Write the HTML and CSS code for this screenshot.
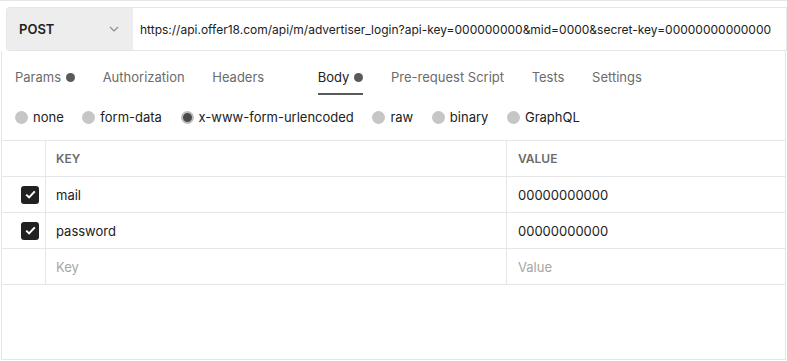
FILE: index.html
```html
<!DOCTYPE html>
<html>
<head>
  <title>Request</title>
  <link rel="stylesheet" href="styles.css">
</head>
<body>
  <div class="request">
    <div class="url-bar">
      <div class="method">
        <span>POST</span>
        <svg class="chevron" width="10" height="6" viewBox="0 0 10 6"><path d="M1 1l4 4 4-4" fill="none" stroke="#8a8a8a" stroke-width="1.1"/></svg>
      </div>
      <div class="url">https://api.offer18.com/api/m/advertiser_login?api-key=000000000&amp;mid=0000&amp;secret-key=00000000000000</div>
    </div>
  </div>

  <div class="panel">
    <ul class="tabs">
      <li class="tab">Params <span class="dot"></span></li>
      <li class="tab">Authorization</li>
      <li class="tab tab-wide">Headers</li>
      <li class="tab active">Body <span class="dot"></span></li>
      <li class="tab">Pre-request Script</li>
      <li class="tab">Tests</li>
      <li class="tab">Settings</li>
    </ul>

    <div class="body-types">
      <label class="radio"><span class="circle"></span>none</label>
      <label class="radio"><span class="circle"></span>form-data</label>
      <label class="radio"><span class="circle checked"></span>x-www-form-urlencoded</label>
      <label class="radio"><span class="circle"></span>raw</label>
      <label class="radio"><span class="circle"></span>binary</label>
      <label class="radio"><span class="circle"></span>GraphQL</label>
    </div>

    <div class="table">
      <div class="row head">
        <div class="cell check"></div>
        <div class="cell key">KEY</div>
        <div class="cell value">VALUE</div>
      </div>
      <div class="row">
        <div class="cell check"><span class="box"><svg width="11" height="9" viewBox="0 0 11 9"><path d="M1.2 4.6l2.9 2.8L9.8 1.4" fill="none" stroke="#fff" stroke-width="2"/></svg></span></div>
        <div class="cell key">mail</div>
        <div class="cell value">00000000000</div>
      </div>
      <div class="row">
        <div class="cell check"><span class="box"><svg width="11" height="9" viewBox="0 0 11 9"><path d="M1.2 4.6l2.9 2.8L9.8 1.4" fill="none" stroke="#fff" stroke-width="2"/></svg></span></div>
        <div class="cell key">password</div>
        <div class="cell value">00000000000</div>
      </div>
      <div class="row">
        <div class="cell check"></div>
        <div class="cell key placeholder">Key</div>
        <div class="cell value placeholder">Value</div>
      </div>
    </div>
  </div>
</body>
</html>
```

FILE: styles.css
```css
body {
  margin: 0;
  font-family: Inter, "Noto Sans", sans-serif;
  font-size: 13px;
  color: #212121;
  background: #fff;
}
.request {
  border-top: 1px solid #e6e6e6;
  padding: 6px 0 0 6px;
}
.url-bar {
  display: flex;
  height: 42px;
  border: 1px solid #e6e6e6;
  border-right: none;
  border-radius: 4px 0 0 4px;
}
.method {
  width: 126px;
  display: flex;
  align-items: center;
  justify-content: space-between;
  padding: 0 14px 0 12px;
  box-sizing: border-box;
  background: #ededed;
  font-weight: 600;
  border-radius: 3px 0 0 3px;
}
.url {
  flex: 1;
  display: flex;
  align-items: center;
  padding-left: 7px;
  font-size: 12px;
  border-right: 1px solid #e6e6e6;
  white-space: nowrap;
  overflow: hidden;
}
.panel {
  margin: 0 1px;
  height: 308px;
  border: 1px solid #e6e6e6;
  border-top: none;
}
.tabs {
  display: flex;
  gap: 27.6px;
  list-style: none;
  margin: 0;
  padding: 0 0 0 13px;
}
.tab {
  padding: 17px 0 7px;
  line-height: 18px;
  color: #6b6b6b;
  border-bottom: 2px solid transparent;
  display: flex;
  align-items: center;
  gap: 5px;
}
.tab-wide {
  margin-right: 26px;
}
.tab.active {
  color: #212121;
  border-bottom-color: #5a5a5a;
}
.dot {
  width: 9px;
  height: 9px;
  border-radius: 50%;
  background: #5a5a5a;
}
.body-types {
  display: flex;
  gap: 18.6px;
  padding: 13px 0 14px 13px;
  line-height: 18px;
}
.radio {
  display: flex;
  align-items: center;
  gap: 5px;
}
.circle {
  width: 13px;
  height: 13px;
  border-radius: 50%;
  background: #c6c6c6;
}
.circle.checked {
  box-sizing: border-box;
  background: #4a4a4a;
  border: 2px solid #bdbdbd;
}
.table {
  border-top: 1px solid #e6e6e6;
}
.row {
  display: flex;
  height: 35px;
  border-bottom: 1px solid #e6e6e6;
}
.cell {
  display: flex;
  align-items: center;
}
.check {
  width: 44px;
  border-right: 1px solid #e6e6e6;
  padding-left: 19px;
  box-sizing: border-box;
}
.key {
  width: 461px;
  padding-left: 10px;
  box-sizing: border-box;
  border-right: 1px solid #e6e6e6;
}
.value {
  flex: 1;
  padding-left: 11px;
}
.head .cell {
  font-size: 12px;
  font-weight: 600;
  color: #6b6b6b;
}
.placeholder {
  color: #a6a6a6;
}
.box {
  width: 18px;
  height: 18px;
  border-radius: 3px;
  background: #212121;
  display: flex;
  align-items: center;
  justify-content: center;
}
```
